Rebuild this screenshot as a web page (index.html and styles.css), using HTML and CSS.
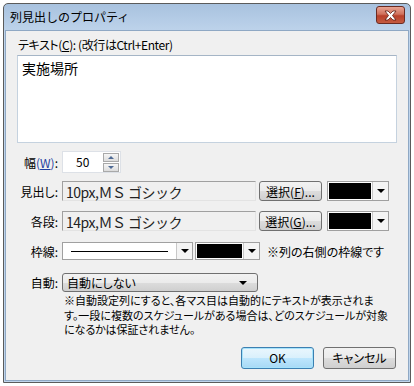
FILE: index.html
```html
<!DOCTYPE html>
<html lang="ja">
<head>
    <meta charset="UTF-8">
    <title>列見出しのプロパティ</title>
    <link rel="stylesheet" href="styles.css">
</head>
<body>
    <div class="window">
        <div class="titlebar">
            <span class="title">列見出しのプロパティ</span>
            <div class="close">
                <svg width="15" height="11" viewBox="0 0 15 11">
                    <path d="M2 1 L5 1 L7.5 3.5 L10 1 L13 1 L9.5 5.5 L13 10 L10 10 L7.5 7.5 L5 10 L2 10 L5.5 5.5 Z" fill="#fff" stroke="#5a1a10" stroke-width="0.8"/>
                </svg>
            </div>
        </div>

        <div class="client">
            <div class="top-label">テキスト(<u>C</u>): (改行はCtrl+Enter)</div>
            <div class="textbox">実施場所</div>

            <!-- width -->
            <div class="row row-width">
                <div class="label">幅<span class="acc">(<u>W</u>)</span>:</div>
                <div class="spin">
                    <div class="spin-value">50</div>
                    <div class="spin-buttons">
                        <div class="spin-btn"><span class="tri-up"></span></div>
                        <div class="spin-btn"><span class="tri-down"></span></div>
                    </div>
                </div>
            </div>

            <!-- header font -->
            <div class="row row-font">
                <div class="label">見出し:</div>
                <div class="font-field">10px,ＭＳ ゴシック</div>
                <div class="btn">選択(<u>F</u>)...</div>
                <div class="color-pick"><div class="swatch"></div><div class="arrow-part"><span class="tri-down dark"></span></div></div>
            </div>

            <!-- each row font -->
            <div class="row row-font row-font2">
                <div class="label">各段:</div>
                <div class="font-field">14px,ＭＳ ゴシック</div>
                <div class="btn">選択(<u>G</u>)...</div>
                <div class="color-pick"><div class="swatch"></div><div class="arrow-part"><span class="tri-down dark"></span></div></div>
            </div>

            <!-- border -->
            <div class="row row-border">
                <div class="label">枠線:</div>
                <div class="line-pick"><div class="line-part"><span class="line"></span></div><div class="arrow-part"><span class="tri-down dark"></span></div></div>
                <div class="color-pick small"><div class="swatch"></div><div class="arrow-part"><span class="tri-down dark"></span></div></div>
                <div class="hint">※列の右側の枠線です</div>
            </div>

            <!-- auto -->
            <div class="row row-auto">
                <div class="label">自動:</div>
                <div class="combo">
                    <span>自動にしない</span>
                    <span class="tri-down dark"></span>
                </div>
            </div>
            <p class="note">※自動設定列にすると、各マス目は自動的にテキストが表示されま<br>す。一段に複数のスケジュールがある場合は、どのスケジュールが対象<br>になるかは保証されません。</p>

            <div class="buttons">
                <div class="btn btn-ok">OK</div>
                <div class="btn btn-cancel">キャンセル</div>
            </div>
        </div>
    </div>
</body>
</html>
```

FILE: styles.css
```css
/* Windows 7 style dialog */
body {
    margin: 0;
    background: #fff;
    font-family: "Noto Sans CJK JP", "Noto Sans", sans-serif;
    font-size: 12px;
    color: #000;
}

.window {
    margin: 3px 0 0 3px;
    width: 406px;
    height: 378px;
    border: 1px solid #5b5b5b;
    border-radius: 5px 5px 0 0;
    background: linear-gradient(#a8c2df, #c0d5ec 30px, #c0d5ec);
    display: flex;
    flex-direction: column;
}

.titlebar {
    flex-shrink: 0;
    height: 26px;
    display: flex;
    align-items: center;
    justify-content: space-between;
    padding: 0 5px 0 6px;
}

.title {
    font-size: 12px;
    color: #000;
    margin-top: -1px;
}

.close {
    width: 27px;
    height: 16px;
    margin-top: -4px;
    border: 1px solid #6b2b22;
    border-radius: 3px;
    background: linear-gradient(#e8a493, #d0715c 45%, #b8402a 55%, #c45a3f);
    display: flex;
    align-items: center;
    justify-content: center;
}

.close svg {
    display: block;
}

.client {
    flex: 1;
    min-height: 0;
    margin: 0 1px 1px 1px;
    border: 1px solid #8fa8c4;
    background: #f0f0f0;
    padding: 0 0 0 11px;
    font-feature-settings: "palt";
    overflow: hidden;
}

.top-label {
    margin-top: 6px;
    height: 16px;
    line-height: 16px;
    padding-left: 1px;
    letter-spacing: -0.4px;
}

.textbox {
    margin-top: 2px;
    width: 370px;
    height: 80px;
    background: #fff;
    border: 1px solid #c5d2df;
    border-top-color: #a5b5c6;
    padding: 3px 4px;
    font-size: 14px;
    line-height: 18px;
}

.row {
    display: flex;
    align-items: center;
    flex-shrink: 0;
}

.label {
    width: 41px;
    text-align: right;
    margin-right: 4px;
    white-space: nowrap;
}

.acc {
    color: #1f3fa0;
}

u {
    text-decoration: underline;
}

/* spin box */
.row-width {
    margin-top: 8px;
    height: 22px;
}

.spin {
    width: 57px;
    height: 20px;
    background: #fff;
    border: 1px solid #dde1e7;
    display: flex;
}

.spin-value {
    flex: 1;
    padding-left: 13px;
    line-height: 20px;
    font-size: 12px;
}

.spin-buttons {
    width: 16px;
    display: flex;
    flex-direction: column;
    gap: 1px;
    padding: 1px 1px 0 0;
}

.spin-btn {
    height: 8px;
    border: 1px solid #a9a9a9;
    background: linear-gradient(#f6f6f6, #dcdcdc);
    display: flex;
    align-items: center;
    justify-content: center;
}

.tri-up {
    width: 0;
    height: 0;
    border-left: 3px solid transparent;
    border-right: 3px solid transparent;
    border-bottom: 3px solid #4f6a94;
}

.tri-down {
    width: 0;
    height: 0;
    border-left: 3px solid transparent;
    border-right: 3px solid transparent;
    border-top: 3px solid #4f6a94;
}

.tri-down.dark {
    border-left-width: 4px;
    border-right-width: 4px;
    border-top: 4px solid #000;
}

/* font rows */
.row-font {
    margin-top: 7px;
    height: 22px;
}

.row-font2 {
    margin-top: 8px;
}

.font-field {
    width: 194px;
    height: 20px;
    border: 1px solid #a0a0a0;
    border-right-color: #e3e3e3;
    border-bottom-color: #e3e3e3;
    background: #f0f0f0;
    font-size: 14px;
    line-height: 20px;
    padding-left: 3px;
    color: #222;
    letter-spacing: -0.5px;
    font-feature-settings: normal;
    box-sizing: border-box;
}

.btn {
    height: 19px;
    border: 1px solid #707070;
    border-radius: 3px;
    background: linear-gradient(#f2f2f2, #ebebeb 50%, #dddddd 50%, #cfcfcf);
    display: flex;
    align-items: center;
    justify-content: center;
    box-sizing: border-box;
}

.row-font .btn {
    width: 63px;
    height: 20px;
    margin-left: 3px;
}

.color-pick {
    margin-left: 5px;
    width: 62px;
    height: 20px;
    border: 1px solid #a0a0a0;
    background: #fff;
    display: flex;
    box-sizing: border-box;
}

.swatch {
    flex: 1;
    margin: 1px;
    background: #000;
}

.arrow-part {
    width: 15px;
    border-left: 1px solid #c8c8c8;
    background: #f4f4f4;
    display: flex;
    align-items: center;
    justify-content: center;
}

/* border row */
.row-border {
    margin-top: 10px;
    height: 18px;
}

.line-pick {
    width: 131px;
    height: 18px;
    border: 1px solid #a0a0a0;
    background: #fff;
    display: flex;
    box-sizing: border-box;
}

.line-part {
    flex: 1;
    display: flex;
    align-items: center;
    padding: 0 8px;
}

.line {
    flex: 1;
    height: 1px;
    background: #000;
}

.color-pick.small {
    margin-left: 2px;
    width: 65px;
    height: 18px;
}

.hint {
    margin-left: 7px;
}

/* auto row */
.row-auto {
    margin-top: 13px;
    height: 19px;
}

.combo {
    width: 196px;
    height: 19px;
    box-sizing: border-box;
    border: 1px solid #707070;
    border-radius: 3px;
    background: linear-gradient(#f2f2f2, #ebebeb 50%, #dddddd 50%, #cfcfcf);
    display: flex;
    align-items: center;
    justify-content: space-between;
    padding: 0 10px 0 4px;
}

.note {
    margin: 1px 0 0 47px;
    line-height: 14.5px;
    font-size: 11px;
    white-space: nowrap;
}

.buttons {
    display: flex;
    justify-content: flex-end;
    gap: 9px;
    margin-top: 10px;
    padding-right: 12px;
}

.buttons .btn {
    width: 73px;
    height: 22px;
}

.btn-ok {
    border-color: #3c7fb1;
    background: linear-gradient(#eaf6fd, #d9f0fc 50%, #bee6fd 50%, #a7d9f5);
    box-shadow: inset 0 0 0 1px #a6e3fb;
}
```
